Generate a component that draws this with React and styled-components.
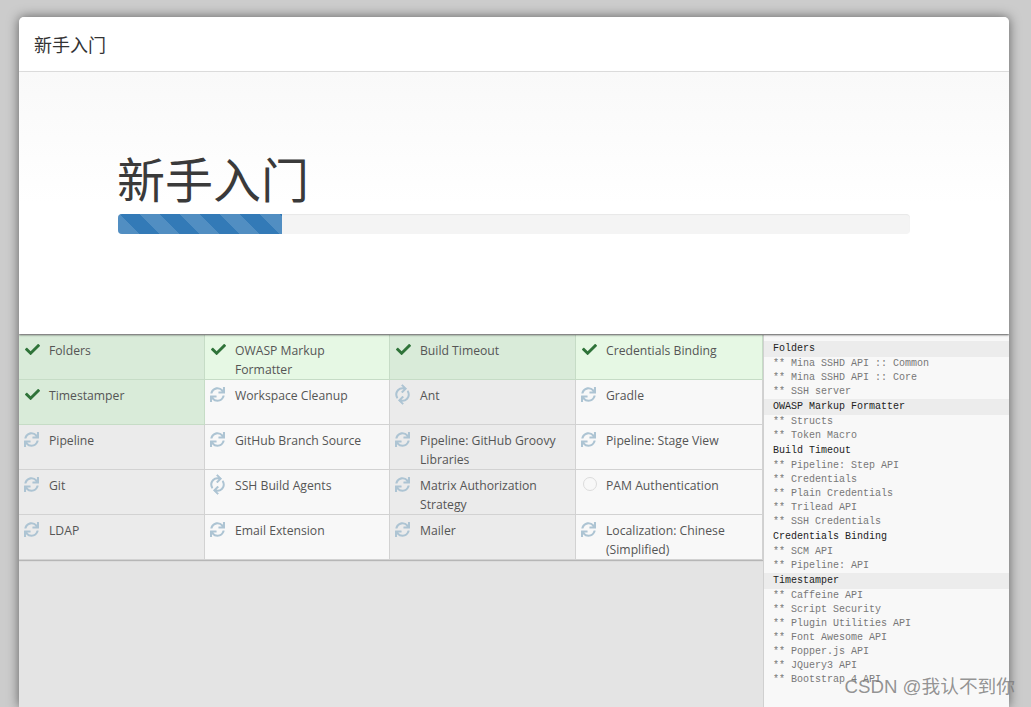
import React from "react";
import styled, { createGlobalStyle } from "styled-components";
import { FaCheck, FaSync } from "react-icons/fa";

const GlobalStyle = createGlobalStyle`
  html, body {
    margin: 0;
    height: 100%;
    overflow: hidden;
    background: #cccccc;
    font-family: "Open Sans", "Noto Sans CJK SC", sans-serif;
  }
`;
const Backdrop = styled.div`
  height: 707px;
  padding: 17px 22px 0 19px;
  box-sizing: border-box;
  position: relative;
  overflow: hidden;
`;
const Dialog = styled.div`
  height: 690px;
  display: flex;
  flex-direction: column;
  background: #e4e4e4;
  border-radius: 5px 5px 0 0;
  box-shadow: 0 0 12px rgba(0, 0, 0, 0.55);
  overflow: hidden;
`;
const Header = styled.div`
  height: 54px;
  flex: none;
  display: flex;
  align-items: center;
  padding-left: 15px;
  background: #fff;
  border-bottom: 1px solid #e5e5e5;
  font-size: 18px;
  color: #333;
`;
const Hero = styled.div`
  height: 262px;
  flex: none;
  box-sizing: border-box;
  padding: 78px 99px 0;
  background: linear-gradient(#f9f9f9, #fff 50%);
  box-shadow: 0 1px 2px rgba(0, 0, 0, 0.6);
  position: relative;
  z-index: 1;
`;
const Title = styled.h1`
  margin: 0 0 0 -1px;
  height: 64px;
  font-size: 48px;
  line-height: 60px;
  font-weight: 400;
  color: #3a3a3a;
`;
const Progress = styled.div`
  height: 20px;
  background: #f4f4f4;
  border-radius: 4px;
  box-shadow: inset 0 1px 1px rgba(0, 0, 0, 0.05);
  overflow: hidden;
`;
const ProgressFill = styled.div`
  height: 100%;
  background-color: #337ab7;
  background-image: linear-gradient(
    45deg,
    rgba(255, 255, 255, 0.15) 25%,
    transparent 25%,
    transparent 50%,
    rgba(255, 255, 255, 0.15) 50%,
    rgba(255, 255, 255, 0.15) 75%,
    transparent 75%,
    transparent
  );
  background-size: 40px 40px;
  background-position: 22px 0;
`;
const Body = styled.div`
  flex: 1;
  display: flex;
  min-height: 0;
  padding-top: 1px;
`;
const Grid = styled.div`
  width: 744px;
  flex: none;
  align-self: flex-start;
  display: grid;
  grid-template-columns: 186px 185px 186px 187px;
  grid-auto-rows: 45px;
  box-shadow: 0 1px 1px rgba(0, 0, 0, 0.2);
`;
const Cell = styled.div`
  display: flex;
  box-sizing: border-box;
  padding: 6px 12px 0 6px;
  border-right: 1px solid #d0d0d0;
  border-bottom: 1px solid #d0d0d0;
  background: ${(p) =>
    p.$state === "success"
      ? p.$odd ? "#d9ebd9" : "#e6f8e4"
      : p.$odd ? "#ebebeb" : "#f8f8f8"};
  border-color: ${(p) => (p.$state === "success" ? "#c6dcc6" : "#d2d2d2")};
`;
const IconSlot = styled.span`
  width: 24px;
  height: 19px;
  flex: none;
  display: flex;
  align-items: flex-start;
  font-size: 15px;
  line-height: 1;
  padding-top: 1px;
`;
const CheckIcon = styled(FaCheck)`
  color: #2f7339;
`;
const SyncIcon = styled(FaSync)`
  color: #adc4d3;
  margin-left: -1px;
  transform: rotate(${(p) => p.$turn || 0}deg);
`;
const PendingIcon = styled.span`
  width: 14px;
  height: 14px;
  box-sizing: border-box;
  margin: 0 0 0 1px;
  border: 1.5px solid #dcdcdc;
  border-radius: 50%;
`;
const Name = styled.span`
  font-size: 12.2px;
  line-height: 19px;
  color: #555;
`;
const Sidebar = styled.div`
  margin-left: 0;
  flex: 1;
  padding-top: 6px;
  background: #f8f8f8;
  border-left: 1px solid #d0d0d0;
  font-family: "Liberation Mono", "DejaVu Sans Mono", monospace;
  font-size: 10px;
`;
const DepHead = styled.div`
  height: 16px;
  line-height: 16px;
  padding-left: 9px;
  color: #222;
  background: ${(p) => (p.$marked ? "#ececec" : "transparent")};
`;
const DepItem = styled.div`
  height: 14px;
  line-height: 14px;
  padding-left: 9px;
  color: #777;
`;
const Watermark = styled.div`
  position: absolute;
  right: 16px;
  bottom: 8px;
  font-family: "Liberation Sans", "Noto Sans CJK SC", sans-serif;
  font-size: 18.7px;
  line-height: 24px;
  color: rgba(120, 120, 120, 0.8);
`;

const plugins = [
  ["Folders", "success"],
  ["OWASP Markup Formatter", "success"],
  ["Build Timeout", "success"],
  ["Credentials Binding", "success"],
  ["Timestamper", "success"],
  ["Workspace Cleanup", "sync"],
  ["Ant", "sync", -45],
  ["Gradle", "sync"],
  ["Pipeline", "sync"],
  ["GitHub Branch Source", "sync"],
  ["Pipeline: GitHub Groovy Libraries", "sync"],
  ["Pipeline: Stage View", "sync"],
  ["Git", "sync"],
  ["SSH Build Agents", "sync", -45],
  ["Matrix Authorization Strategy", "sync"],
  ["PAM Authentication", "pending"],
  ["LDAP", "sync"],
  ["Email Extension", "sync"],
  ["Mailer", "sync"],
  ["Localization: Chinese (Simplified)", "sync"],
];

const deps = [
  ["Folders", true, ["Mina SSHD API :: Common", "Mina SSHD API :: Core", "SSH server"]],
  ["OWASP Markup Formatter", true, ["Structs", "Token Macro"]],
  ["Build Timeout", false, ["Pipeline: Step API", "Credentials", "Plain Credentials", "Trilead API", "SSH Credentials"]],
  ["Credentials Binding", false, ["SCM API", "Pipeline: API"]],
  ["Timestamper", true, ["Caffeine API", "Script Security", "Plugin Utilities API", "Font Awesome API", "Popper.js API", "JQuery3 API", "Bootstrap 4 API"]],
];

const StatusIcon = ({ state, turn }) => {
  if (state === "success") return <CheckIcon />;
  if (state === "pending") return <PendingIcon />;
  return <SyncIcon $turn={turn} />;
};

export default function App() {
  return (
    <Backdrop>
      <GlobalStyle />
      <Dialog>
        <Header>新手入门</Header>
        <Hero>
          <Title>新手入门</Title>
          <Progress>
            <ProgressFill style={{ width: `${(164 / 792) * 100}%` }} />
          </Progress>
        </Hero>
        <Body>
          <Grid>
            {plugins.map(([name, state, turn], i) => (
              <Cell key={name} $state={state} $odd={i % 2 === 0}>
                <IconSlot>
                  <StatusIcon state={state} turn={turn} />
                </IconSlot>
                <Name>{name}</Name>
              </Cell>
            ))}
          </Grid>
          <Sidebar>
            {deps.map(([head, marked, items]) => (
              <React.Fragment key={head}>
                <DepHead $marked={marked}>{head}</DepHead>
                {items.map((item) => (
                  <DepItem key={item}>** {item}</DepItem>
                ))}
              </React.Fragment>
            ))}
          </Sidebar>
        </Body>
      </Dialog>
      <Watermark>CSDN @我认不到你</Watermark>
    </Backdrop>
  );
}
